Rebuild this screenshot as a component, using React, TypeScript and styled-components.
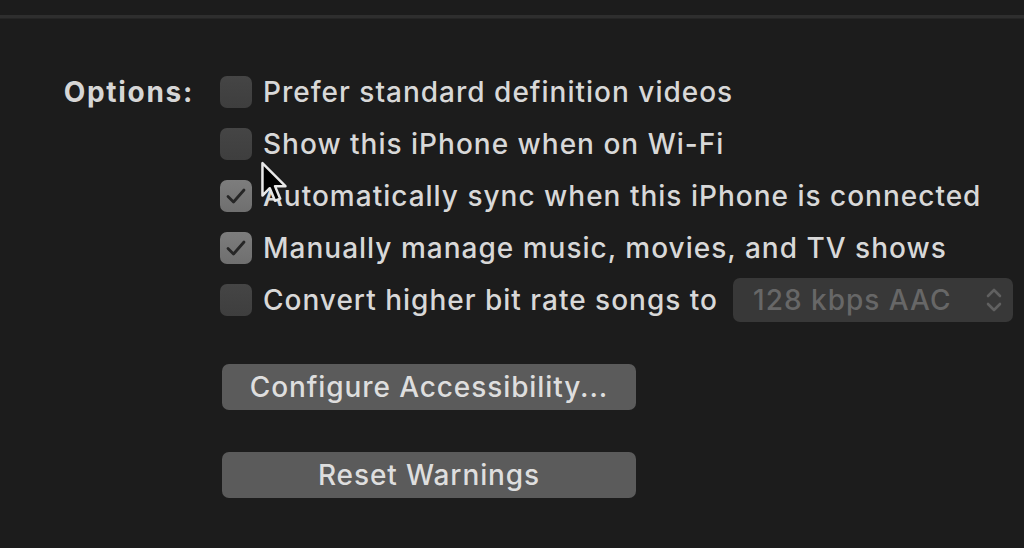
import React from "react";
import styled, { createGlobalStyle } from "styled-components";

const Global = createGlobalStyle`
  html, body { margin: 0; padding: 0; background: #1c1c1c; }
  body { width: 1024px; height: 548px; overflow: hidden; font-family: Inter, "Liberation Sans", sans-serif; }
`;

const Page = styled.div`
  width: 1024px;
  height: 548px;
  background: #1c1c1c;
  position: relative;
`;

const Divider = styled.div`
  margin-top: 15px;
  height: 3px;
  background: #2e2e2e;
  border-bottom: 1px solid #252525;
`;

const Form = styled.div`
  display: grid;
  grid-template-columns: 194px auto;
  column-gap: 26px;
  padding-top: 55px;
`;

const Label = styled.div`
  text-align: right;
  font-weight: 700;
  font-size: 28px;
  letter-spacing: 1.7px;
  color: #d6d6d6;
  line-height: 36px;
`;

const Options = styled.div`
  display: flex;
  flex-direction: column;
  gap: 16px;
`;

const Row = styled.div`
  display: flex;
  align-items: center;
  height: 36px;
  gap: 11px;
`;

const Box = styled.div<{ $checked?: boolean }>`
  width: 32px;
  height: 32px;
  flex: none;
  border-radius: 7px;
  box-sizing: border-box;
  display: flex;
  align-items: center;
  justify-content: center;
  background: ${(p) => (p.$checked ? "linear-gradient(#7d7d7d, #6f6f6f)" : "linear-gradient(#454545, #3e3e3e)")};
`;

const Text = styled.span`
  font-size: 28px;
  color: #d8d8d8;
  font-weight: 500;
  letter-spacing: 1px;
  white-space: nowrap;
`;

const Popup = styled.div`
  margin-left: 4px;
  width: 280px;
  flex: none;
  height: 44px;
  box-sizing: border-box;
  border-radius: 7px;
  background: #383838;
  display: flex;
  align-items: center;
  justify-content: space-between;
  padding: 0 10px 0 20px;
  color: #676767;
  font-size: 28px;
  letter-spacing: 1px;
  font-weight: 500;
`;

const Buttons = styled.div`
  display: flex;
  flex-direction: column;
  gap: 42px;
  margin-top: 46px;
  margin-left: 2px;
`;

const Button = styled.div`
  width: 414px;
  height: 46px;
  box-sizing: border-box;
  border-radius: 7px;
  background: #5b5b5b;
  display: flex;
  align-items: center;
  justify-content: center;
  color: #dedede;
  font-size: 28px;
  letter-spacing: 0.9px;
  font-weight: 500;
`;

const Cursor = styled.svg`
  position: absolute;
  left: 259px;
  top: 145px;
`;

const Check = () => (
  <svg width="22" height="18" viewBox="0 0 22 18">
    <path d="M3 9.5 L8.5 15 L19 3" fill="none" stroke="#262626" strokeWidth="2.8" strokeLinecap="round" strokeLinejoin="round" />
  </svg>
);

const Chevrons = () => (
  <svg width="18" height="30" viewBox="0 0 18 30">
    <path d="M3 11 L9 5 L15 11 M3 19 L9 25 L15 19" fill="none" stroke="#606060" strokeWidth="2.6" strokeLinecap="round" strokeLinejoin="round" />
  </svg>
);

const opts: { label: string; checked: boolean }[] = [
  { label: "Prefer standard definition videos", checked: false },
  { label: "Show this iPhone when on Wi-Fi", checked: false },
  { label: "Automatically sync when this iPhone is connected", checked: true },
  { label: "Manually manage music, movies, and TV shows", checked: true },
];

export default function App() {
  return (
    <Page>
      <Global />
      <Divider />
      <Form>
        <Label>Options:</Label>
        <div>
          <Options>
            {opts.map((o) => (
              <Row key={o.label}>
                <Box $checked={o.checked}>{o.checked && <Check />}</Box>
                <Text>{o.label}</Text>
              </Row>
            ))}
            <Row>
              <Box />
              <Text>Convert higher bit rate songs to</Text>
              <Popup>
                <span>128 kbps AAC</span>
                <Chevrons />
              </Popup>
            </Row>
          </Options>
          <Buttons>
            <Button>Configure Accessibility...</Button>
            <Button>Reset Warnings</Button>
          </Buttons>
        </div>
      </Form>
      <Cursor width="32" height="46" viewBox="0 0 30 44">
        <path d="M3 3 L3 34 L10 27 L15 39 L20 37 L15 25 L25 25 Z" fill="#000" stroke="#e8e8e8" strokeWidth="2.4" strokeLinejoin="round" />
      </Cursor>
    </Page>
  );
}
